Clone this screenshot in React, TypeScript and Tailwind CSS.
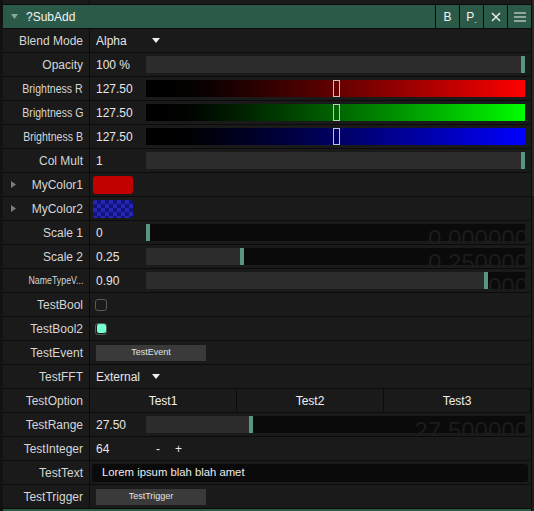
import type { ReactNode } from "react"

const font = "font-['Liberation_Sans',Arial,sans-serif]"

function Row({
    label,
    children,
    labelClass = "",
    expand = false,
}: {
    label: string
    children?: ReactNode
    labelClass?: string
    expand?: boolean
}) {
    return (
        <div className="flex h-[24px] shrink-0 overflow-hidden border-b border-[#0b0b0b] bg-[#1a1a1a]">
            <div className="relative flex w-[87px] shrink-0 items-center justify-end border-r border-[#0b0b0b] pr-[6px] text-[12px] text-[#d6d6d6]">
                {expand && (
                    <svg
                        className="absolute left-[8px] top-[8px]"
                        width="5"
                        height="7"
                        viewBox="0 0 5 7"
                    >
                        <path d="M0 0 L5 3.5 L0 7 Z" fill="#7d7d7d" />
                    </svg>
                )}
                <span className={`inline-block whitespace-nowrap ${labelClass}`}>
                    {label}
                </span>
            </div>
            <div className="relative flex min-w-0 flex-1 items-center text-[12px] text-[#e6e6e6]">
                {children}
            </div>
        </div>
    )
}

function Value({ text }: { text: string }) {
    return <span className="w-[56px] shrink-0 pl-[6px]">{text}</span>
}

function Slider({
    value,
    ghost,
    fill = true,
}: {
    value: number
    ghost?: string
    fill?: boolean
}) {
    return (
        <div className="relative mr-[6px] h-[17px] flex-1 bg-[#0a0a0a]">
            {ghost && (
                <span className="absolute -right-[3px] top-[3px] text-[24px] leading-none text-[#1c1c1c]">
                    {ghost}
                </span>
            )}
            {fill && (
                <div
                    className="absolute bottom-0 left-0 top-0 bg-[#2c2c2c]"
                    style={{ width: `calc(${value} * (100% - 4px) + 2px)` }}
                />
            )}
            <div
                className="absolute bottom-0 top-0 w-[4px] bg-[#58977e]"
                style={{ left: `calc(${value} * (100% - 4px))` }}
            />
        </div>
    )
}

function ColorSlider({ gradient }: { gradient: string }) {
    return (
        <div className={`relative mr-[6px] h-[17px] flex-1 ${gradient}`}>
            <div className="absolute bottom-0 left-[calc(50%-3px)] top-0 w-[7px] border border-[#c4c4c4]" />
        </div>
    )
}

function Dropdown({ text }: { text: string }) {
    return (
        <>
            <Value text={text} />
            <svg className="ml-[6px]" width="8" height="5" viewBox="0 0 8 5">
                <path d="M0 0 L8 0 L4 5 Z" fill="#f0f0f0" />
            </svg>
        </>
    )
}

function SmallButton({ text }: { text: string }) {
    return (
        <div className="ml-[6px] flex h-[16px] w-[110px] items-center justify-center bg-[#3a3a3a] text-[9px] text-[#e2e2e2]">
            {text}
        </div>
    )
}

export default function App() {
    return (
        <div
            className={`flex h-[511px] w-[534px] overflow-hidden bg-[#121212] ${font}`}
        >
            <div className="w-[3px] shrink-0 bg-[#121212]" />

            <div className="flex w-[528px] shrink-0 flex-col">
                <div className="flex h-[5px] shrink-0 border-b border-[#0b0b0b] bg-[#1a1a1a]">
                    <div className="w-[87px] border-r border-[#0b0b0b]" />
                </div>

                <div className="flex h-[24px] shrink-0 items-center border-b border-[#0b0b0b] bg-[#2c5a49] text-[12px] text-[#f2f2f2]">
                    <svg
                        className="ml-[8px]"
                        width="7"
                        height="5"
                        viewBox="0 0 7 5"
                    >
                        <path d="M0 0 L7 0 L3.5 5 Z" fill="#8aa79c" />
                    </svg>
                    <span className="ml-[8px]">?SubAdd</span>
                    <div className="ml-auto flex h-full">
                        <div className="flex w-[24px] items-center justify-center border-l border-[#0b0b0b]">
                            B
                        </div>
                        <div className="flex w-[24px] items-center justify-center border-l border-[#0b0b0b]">
                            P
                            <span className="mt-[7px] text-[9px] leading-none">.</span>
                        </div>
                        <div className="flex w-[24px] items-center justify-center border-l border-[#0b0b0b]">
                            <svg width="10" height="10" viewBox="0 0 10 10">
                                <path
                                    d="M1 1 L9 9 M9 1 L1 9"
                                    stroke="#f2f2f2"
                                    strokeWidth="1.4"
                                />
                            </svg>
                        </div>
                        <div className="flex w-[24px] items-center justify-center border-l border-[#0b0b0b]">
                            <svg width="12" height="10" viewBox="0 0 12 10">
                                <path
                                    d="M0 1 H12 M0 5 H12 M0 9 H12"
                                    stroke="#f2f2f2"
                                    strokeWidth="1.2"
                                />
                            </svg>
                        </div>
                    </div>
                </div>

                <Row label="Blend Mode">
                    <Dropdown text="Alpha" />
                </Row>
                <Row label="Opacity">
                    <Value text="100 %" />
                    <Slider value={1} />
                </Row>
                <Row label="Brightness R" labelClass="origin-right scale-x-[0.88]">
                    <Value text="127.50" />
                    <ColorSlider gradient="bg-linear-to-r from-[#000000] to-[#ff0000]" />
                </Row>
                <Row label="Brightness G" labelClass="origin-right scale-x-[0.88]">
                    <Value text="127.50" />
                    <ColorSlider gradient="bg-linear-to-r from-[#000000] to-[#00ff00]" />
                </Row>
                <Row label="Brightness B" labelClass="origin-right scale-x-[0.88]">
                    <Value text="127.50" />
                    <ColorSlider gradient="bg-linear-to-r from-[#000000] to-[#0000ff]" />
                </Row>
                <Row label="Col Mult">
                    <Value text="1" />
                    <Slider value={1} ghost="1.000000" />
                </Row>
                <Row label="MyColor1" expand>
                    <div className="ml-[3px] h-[18px] w-[40px] rounded-[3px] bg-[#c20000]" />
                </Row>
                <Row label="MyColor2" expand>
                    <div className="ml-[3px] h-[18px] w-[40px] rounded-[3px] bg-[conic-gradient(#14147e_25%,#2626b4_0_50%,#14147e_0_75%,#2626b4_0)] bg-[length:8px_8px]" />
                </Row>
                <Row label="Scale 1">
                    <Value text="0" />
                    <Slider value={0} ghost="0.000000" fill={false} />
                </Row>
                <Row label="Scale 2">
                    <Value text="0.25" />
                    <Slider value={0.25} ghost="0.250000" />
                </Row>
                <Row
                    label="NameTypeV..."
                    labelClass="origin-right scale-x-[0.88] text-[10px]"
                >
                    <Value text="0.90" />
                    <Slider value={0.9} ghost="0.900000" />
                </Row>
                <Row label="TestBool">
                    <div className="ml-[5px] h-[12px] w-[12px] rounded-[3px] border border-[#5a5a5a] bg-[#1a1a1a]" />
                </Row>
                <Row label="TestBool2">
                    <div className="ml-[5px] flex h-[12px] w-[12px] items-center justify-center rounded-[3px] border border-[#5a5a5a] bg-[#1a1a1a]">
                        <div className="h-[9px] w-[9px] rounded-[2px] bg-[#74ffd2]" />
                    </div>
                </Row>
                <Row label="TestEvent">
                    <SmallButton text="TestEvent" />
                </Row>
                <Row label="TestFFT">
                    <Dropdown text="External" />
                </Row>
                <Row label="TestOption">
                    <div className="grid h-full flex-1 grid-cols-3 text-[12px] text-[#f0f0f0]">
                        {["Test1", "Test2", "Test3"].map((t) => (
                            <div
                                key={t}
                                className="flex items-center justify-center border-r border-[#0b0b0b]"
                            >
                                {t}
                            </div>
                        ))}
                    </div>
                </Row>
                <Row label="TestRange">
                    <Value text="27.50" />
                    <Slider value={0.275} ghost="27.500000" />
                </Row>
                <Row label="TestInteger">
                    <Value text="64" />
                    <span className="ml-[10px]">-</span>
                    <span className="ml-[15px]">+</span>
                </Row>
                <Row label="TestText">
                    <div className="ml-[2px] mr-[3px] flex h-[18px] flex-1 items-center rounded-[3px] bg-[#0a0a0a] pl-[10px] text-[11.3px] text-[#ececec]">
                        Lorem ipsum blah blah amet
                    </div>
                </Row>
                <Row label="TestTrigger">
                    <SmallButton text="TestTrigger" />
                </Row>

                <div className="h-[4px] shrink-0 bg-[#2c5a49]" />
            </div>

            <div className="flex w-[3px] shrink-0 flex-col border-l border-[#0b0b0b]">
                <div className="h-[196px] bg-[#2a2a2a]" />
                <div className="flex-1 bg-[#1e1e1e]" />
            </div>
        </div>
    )
}
